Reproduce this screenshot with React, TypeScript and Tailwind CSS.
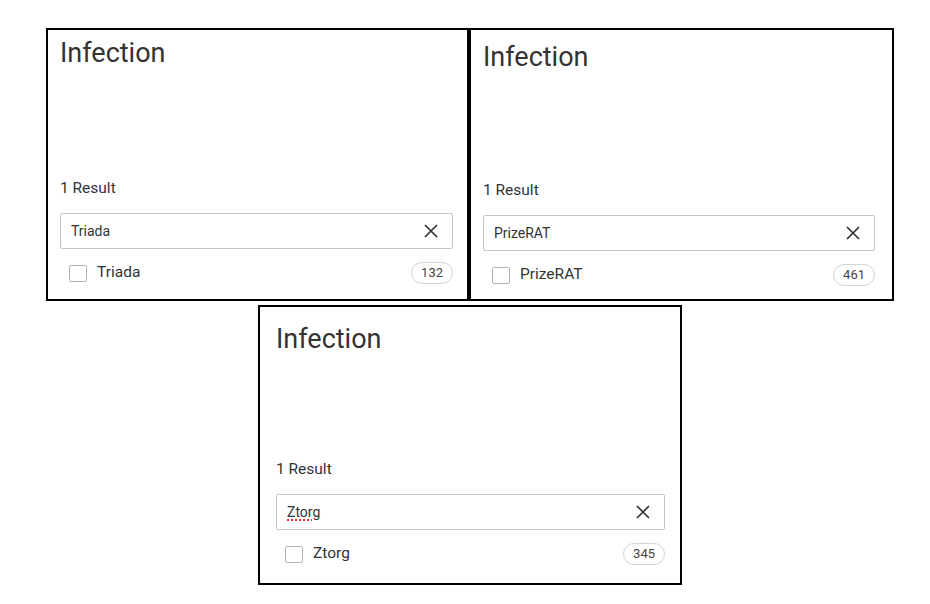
import React from 'react';

interface Facet {
  query: string;
  count: number;
  box: string;
  pad: string;
  spacer: string;
  misspelled?: boolean;
}

const facets: Facet[] = [
  { query: 'Triada', count: 132, box: 'w-[423px] h-[273px]', pad: 'pt-[7px] pl-[12px] pr-[14px]', spacer: 'mt-[109px]' },
  { query: 'PrizeRAT', count: 461, box: 'w-[425px] h-[273px]', pad: 'pt-[11px] pl-[12px] pr-[17px]', spacer: 'mt-[107px]' },
];

const ztorg: Facet = {
  query: 'Ztorg',
  count: 345,
  box: 'w-[424px] h-[280px]',
  pad: 'pt-[16px] pl-[16px] pr-[15px]',
  spacer: 'mt-[104px]',
  misspelled: true,
};

const CloseIcon = () => (
  <svg width="14" height="14" viewBox="0 0 14 14" fill="none" stroke="#333" strokeWidth="1.7" aria-hidden="true">
    <path d="M1 1l12 12M13 1L1 13" />
  </svg>
);

const FacetPanel: React.FC<{ facet: Facet }> = ({ facet }) => (
  <div className={`${facet.box} ${facet.pad} border-2 border-black bg-white flex flex-col shrink-0`}>
    <h2 className="text-[27px] leading-[32px] font-normal text-[#333]">Infection</h2>

    <p className={`${facet.spacer} text-[15.5px] leading-[20px] text-[#333]`}>1 Result</p>

    <div className="mt-[15px] h-[36px] flex items-center justify-between border border-[#c6c6c6] rounded-[2px] pl-[10px] pr-[14px]">
      <span
        className={`text-[14px] text-[#333] ${facet.misspelled ? 'underline decoration-dotted decoration-red-500 decoration-[1.5px] underline-offset-[3px]' : ''}`}
      >
        {facet.query}
      </span>
      <CloseIcon />
    </div>

    <div className="mt-[13px] h-[22px] flex items-center justify-between pl-[9px]">
      <label className="flex items-center gap-[10px]">
        <span className="w-[18px] h-[17px] border border-[#b5b5b5] rounded-[2px] bg-white" />
        <span className="text-[15.5px] text-[#333]">{facet.query}</span>
      </label>
      <span className="h-[22px] px-[9px] flex items-center rounded-full border border-[#d4d4d4] text-[13px] text-[#444]">
        {facet.count}
      </span>
    </div>
  </div>
);

export default function App() {
  return (
    <div className="min-h-screen bg-white pt-[28px] pl-[46px] font-['Roboto',_'Liberation_Sans',_sans-serif]">
      <div className="flex">
        {facets.map((f) => (
          <FacetPanel key={f.query} facet={f} />
        ))}
      </div>
      <div className="mt-[4px] ml-[212px] flex">
        <FacetPanel facet={ztorg} />
      </div>
    </div>
  );
}
